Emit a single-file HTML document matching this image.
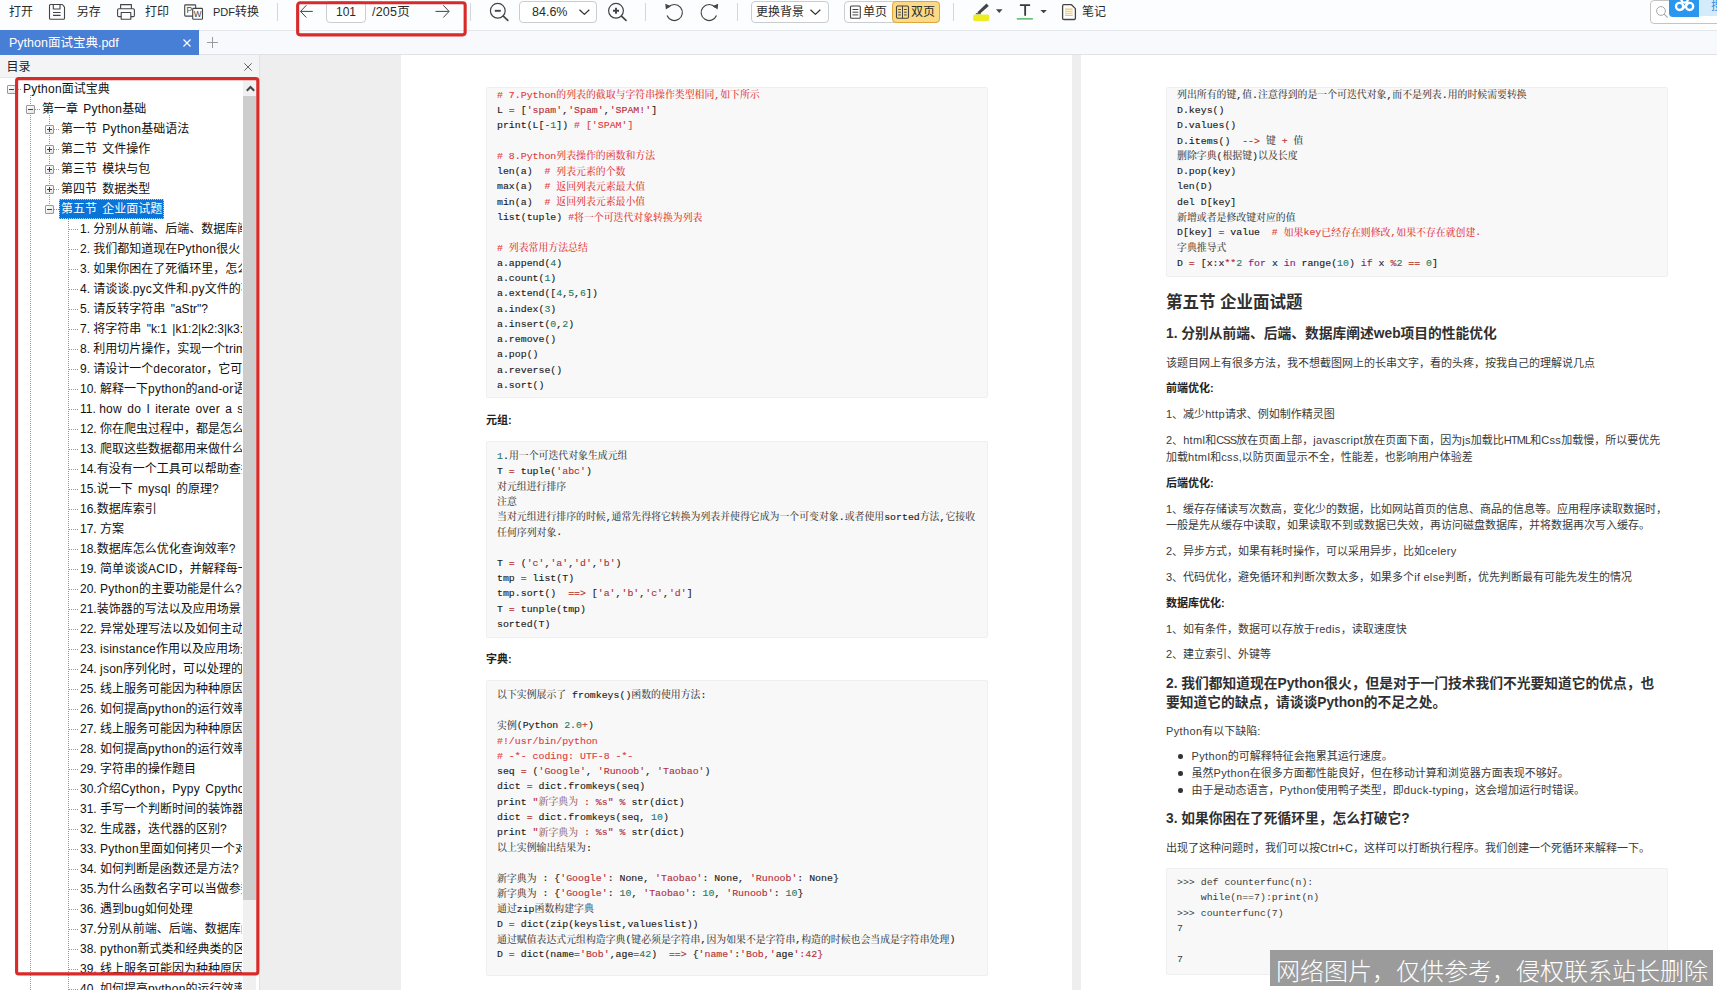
<!DOCTYPE html>
<html lang="zh-CN">
<head>
<meta charset="utf-8">
<title>Python面试宝典.pdf</title>
<style>
*{box-sizing:border-box;margin:0;padding:0}
html,body{width:1717px;height:990px;overflow:hidden;background:#fff}
body{position:relative;font-family:"Liberation Sans","Noto Sans CJK SC",sans-serif;font-size:12px;color:#222}
.abs{position:absolute}
/* toolbar */
#toolbar{position:absolute;left:0;top:0;width:1717px;height:31px;background:#fbfdff;border-bottom:1px solid #e3e6ea}
#toolbar .t{position:absolute;top:0;height:24px;line-height:24px;font-size:12px;color:#2b2b2b;white-space:nowrap}
#toolbar svg{position:absolute;overflow:visible}
.sep{position:absolute;top:3px;width:1px;height:18px;background:#d3d6da}
.box{position:absolute;border:1px solid #c9cdd2;border-radius:4px;background:#fff}
/* tabs */
#tabs{position:absolute;left:0;top:31px;width:1717px;height:24px;background:#f7f9fc;border-bottom:1px solid #dfe3e8}
#tab1{position:absolute;left:0;top:-1px;width:199px;height:25px;background:#477ed6;color:#fff;font-size:12.5px;line-height:26px;padding-left:9px;white-space:nowrap}
/* sidebar */
#side{position:absolute;left:0;top:55px;width:260px;height:935px;background:#fff;border-right:1px solid #e1e1e1;overflow:hidden}
#sidehead{position:absolute;left:0;top:0;width:259px;height:23px;background:#f3f4f6;font-size:12px;line-height:24px;padding-left:6.500px;color:#222;border-bottom:1px solid #e6e6e6}
#tree{position:absolute;left:0;top:24px;width:242px;height:911px;overflow:hidden;font-size:12px;color:#111}
.ti{position:absolute;height:20px;line-height:21px;white-space:nowrap}
#sb{position:absolute;left:243px;top:24px;width:13px;height:911px;background:#f0f0f0}
#sbthumb{position:absolute;left:0;top:17px;width:13px;height:804px;background:#cdcdcd}
#redbox1{position:absolute;left:15px;top:77px;width:244px;height:898px;border:3px solid #d9282a;border-radius:4px}
#redbox2{position:absolute;left:296px;top:-3px;width:171px;height:40px;border:3px solid #d9282a;border-radius:4px}
/* viewer */
#viewer{position:absolute;left:260px;top:55px;width:1457px;height:935px;background:#eeeeee;overflow:hidden}
.page{position:absolute;top:0;height:935px;background:#fff;overflow:hidden}
#p1{left:141px;width:671px}
#p2{left:821px;width:640px}
/* pdf content */
.code{position:absolute;left:85px;width:502px;background:#f8f8f8;border:1px solid #efefef;border-radius:2px}
pre{position:absolute;left:11px;margin:0;font-family:"Liberation Mono","Noto Serif CJK SC",monospace;font-size:9.9px;line-height:15.27px;color:#1a1a1a;white-space:pre;-webkit-text-stroke:0.13px}
pre .z{font-size:9.9px;color:#444;font-weight:500;-webkit-text-stroke:0;position:relative;top:.5px}
.c{color:#e23c3e}.c .z{color:#e23c3e}
.s{color:#b42f3a}.s .z{color:#9a6a6e}.n{color:#2a7a63}.k{color:#7a2a8a}.o{color:#b52a2a}.g{color:#555}
.h{position:absolute;left:85px;white-space:nowrap;font-weight:bold;color:#222}
.p{position:absolute;left:85px;white-space:nowrap;font-size:10.75px;color:#3a3a3a;line-height:17px}
#wm{position:absolute;left:1270px;top:950px;width:443px;height:36px;background:#9b9b9b;color:#fff;font-size:24px;font-weight:300;line-height:36px;white-space:nowrap;padding-left:6px;padding-top:4px;overflow:hidden}

.ws{word-spacing:2px}.la{letter-spacing:.25px}
.vl{position:absolute;width:1px;background-image:linear-gradient(to bottom,#9a9a9a 50%,transparent 50%);background-size:1px 2px}
.hl{position:absolute;height:1px;background-image:linear-gradient(to right,#9a9a9a 50%,transparent 50%);background-size:2px 1px}
.eb{position:absolute;width:9px;height:9px;border:1px solid #989898;border-radius:1px;background:linear-gradient(135deg,#fff,#e4e4e4)}
.eb:before{content:"";position:absolute;left:1px;top:3px;width:5px;height:1px;background:#3a3f6a}
.eb.pl:after{content:"";position:absolute;left:3px;top:1px;width:1px;height:5px;background:#3a3f6a}
.ti.sel{background:#0a74d8;color:#fff;padding:0 2px;height:20px;outline:1px dotted #f5c38a;outline-offset:-1px}

.b11{font-size:11px;line-height:18px}

.h3{font-size:16.5px;color:#303030}
.h4{font-size:13.75px;color:#303030}
.p{font-size:11px}
.lo{letter-spacing:.35px}.up{letter-spacing:-.9px}
.li{left:110.5px}
.li:before{content:"";position:absolute;left:-13.5px;top:50%;margin-top:-2px;width:4.5px;height:4.5px;border-radius:50%;background:#333}
pre.plain{color:#3c3c3c;-webkit-text-stroke:0}
</style>
</head>
<body>
<div id="toolbar">

<div class="t" style="left:9px">打开</div>
<div class="t" style="left:76.7px">另存</div>
<div class="t" style="left:145px">打印</div>
<div class="t" style="left:213px"><span style="font-size:11px">PDF</span>转换</div>
<div class="sep" style="left:277px"></div>
<div class="box" style="left:326px;top:1px;width:40px;height:22px"></div>
<div class="t" style="left:326px;width:40px;text-align:center;font-size:12px">101</div>
<div class="t" style="left:372px;font-size:12.5px;letter-spacing:.2px">/205页</div>
<div class="sep" style="left:470px"></div>
<div class="box" style="left:519px;top:1px;width:78px;height:22px"></div>
<div class="t" style="left:532px;font-size:12.5px">84.6%</div>
<div class="sep" style="left:645px"></div>
<div class="sep" style="left:737px"></div>
<div class="box" style="left:751px;top:1px;width:78px;height:22px"></div>
<div class="t" style="left:756px">更换背景</div>
<div class="box" style="left:844px;top:1px;width:96px;height:22px"></div>
<div class="t" style="left:863px">单页</div>
<div class="box" style="left:892px;top:1px;width:48px;height:22px;background:#fbd985;border-color:#dfa63c"></div>
<div class="t" style="left:911px">双页</div>
<div class="sep" style="left:953px"></div>
<div class="t" style="left:1082px">笔记</div>
<div class="box" style="left:1650px;top:0;width:80px;height:24px;border-radius:4px;border-color:#c4c4c4"></div>
<div class="abs" style="left:1699px;top:0;width:18px;height:16px;background:#d4ebfb"></div>
<div class="abs" style="left:1711px;top:-2px;font-size:12px;color:#2b8fe6;line-height:16px">搜</div>
<div class="abs" style="left:1669px;top:0;width:30px;height:17px;background:#2a96ee;border-radius:0 0 0 4px"></div>
<svg style="left:0;top:0" width="1717" height="31" viewBox="0 0 1717 31" fill="none" stroke="#444" stroke-width="1.1" stroke-linejoin="round">
<!-- save -->
<path d="M49.5 5.5a1 1 0 0 1 1-1H62.300L64.500 7.200V18.300a1 1 0 0 1-1 1H50.500a1 1 0 0 1-1-1z"/>
<path d="M53.300 4.500V9H60V4.500M53 12.500H60.600M53 15.400H60.600"/>
<!-- print -->
<path d="M120.600 8.700V4.600H131.400V8.700"/>
<rect x="117.600" y="8.700" width="16.800" height="7.900" rx="1.200"/>
<rect x="121.200" y="12.500" width="9.600" height="6.800" fill="#fbfdff"/>
<!-- pdf->word -->
<rect x="184.700" y="4.900" width="11" height="11.200" rx=".8" fill="#fbfdff"/>
<rect x="192.700" y="8.400" width="9.800" height="10.800" rx=".8" fill="#fbfdff"/>
<text x="186.600" y="13" font-family="Liberation Sans,sans-serif" font-size="8.600" fill="#444" stroke="none">P</text>
<text x="193.800" y="17" font-family="Liberation Sans,sans-serif" font-size="8.200" fill="#444" stroke="none">W</text>
<!-- arrows -->
<path d="M312.800 11.400H300.700M306.300 5.300L300.500 11.400l5.800 6.100" stroke-width="1"/>
<path d="M435.500 11.400H448.900M443.300 5.300L449.100 11.400l-5.800 6.100" stroke-width="1"/>
<!-- zoom out -->
<circle cx="497.800" cy="10.800" r="7.400" stroke-width="1.200"/>
<path d="M494.800 10.800h6" stroke-width="1.900"/>
<path d="M503.300 16.100l4.500 4.200" stroke-width="1.700" stroke-linecap="round"/>
<!-- chevron zoom -->
<path d="M579.500 9.700l4.900 4.700 4.900-4.700" stroke-width="1.300" stroke="#333"/>
<!-- zoom in -->
<circle cx="616" cy="10.800" r="7.400" stroke-width="1.200"/>
<path d="M613 10.800h6M616 7.800v6" stroke-width="1.900"/>
<path d="M621.500 16.100l4.500 4.200" stroke-width="1.700" stroke-linecap="round"/>
<!-- rotate ccw -->
<path d="M668.300 7.300A8 8 0 1 1 667 15.600" stroke-width="1.200"/>
<path d="M665.300 3.800l.6 5.800 4.800-3.600z" fill="#444" stroke="none"/>
<!-- rotate cw -->
<path d="M715.200 7.300A8 8 0 1 0 716.500 15.600" stroke-width="1.200"/>
<path d="M718.200 3.800l-.6 5.800-4.800-3.600z" fill="#444" stroke="none"/>
<!-- chevron bg -->
<path d="M810.500 9.700l4.900 4.700 4.900-4.700" stroke-width="1.300" stroke="#333"/>
<!-- single page icon -->
<rect x="850.500" y="6" width="9.800" height="12.300" rx="1" stroke-width="1.100"/>
<path d="M852.500 9.500h5.800M852.500 12.200h5.800M852.500 14.900h5.800" stroke-width="1"/>
<!-- double page icon -->
<rect x="896.500" y="6" width="12" height="12.300" rx="1.200" stroke-width="1.100"/>
<path d="M902.500 6v12.300M898.300 9.500h2.600M898.300 12.200h2.600M898.300 14.900h2.600M904.100 9.500h2.600M904.100 12.200h2.600M904.100 14.900h2.600" stroke-width="1"/>
<!-- highlighter -->
<rect x="973.200" y="14.500" width="16" height="6.500" rx="1.500" fill="#eded21" stroke="none"/>
<path d="M977.400 12.300L986.500 3.600l2.300 2.300-9.200 8.200z" fill="#444" stroke="none"/>
<path d="M975.800 13.600h5" stroke="#666" stroke-width="1.300"/>
<path d="M996 9.300h6.500l-3.250 3.600z" fill="#444" stroke="none"/>
<!-- T -->
<path d="M1019.900 5.050h10.200M1025.150 5v10.700" stroke="#3a3a3a" stroke-width="1.800"/>
<rect x="1016.800" y="18" width="16.100" height="1.700" fill="#6cc079" stroke="none"/>
<path d="M1040.400 9.900h6.500l-3.250 3.400z" fill="#444" stroke="none"/>
<!-- note -->
<path d="M1063.900 4.700h7.600l3.900 3.900v9.600a1.300 1.300 0 0 1-1.300 1.300h-10.200a1.300 1.300 0 0 1-1.300-1.300v-12.200a1.300 1.300 0 0 1 1.300-1.300z" stroke-width="1.300" fill="#fff"/>
<path d="M1065 9.100h7.700M1065 11.200h7.700M1065 13.300h7.700M1065 15.400h7.700" stroke="#f2c45f" stroke-width="1.100"/>
<!-- search -->
<circle cx="1661" cy="11" r="4.400" stroke="#a8a8a8" stroke-width="1"/>
<path d="M1664.200 14.200l3.500 3.400" stroke="#a8a8a8" stroke-width="1.100"/>
<!-- cloud -->
<g stroke="#fff" stroke-width="2.300" stroke-linecap="round"><circle cx="1679.600" cy="6.400" r="3.600"/><circle cx="1689.600" cy="6.400" r="3.600"/><circle cx="1684.600" cy="-.500" r="3.200"/><path d="M1682.200 9.300L1687.800 3.400"/></g>
</svg>

</div>
<div id="tabs">
<div id="tab1">Python面试宝典.pdf</div>

<svg class="abs" style="left:183px;top:8px" width="8" height="8" viewBox="0 0 8 8" stroke="#fff" stroke-width="1.200"><path d="M.5.500l7 7M7.500.500l-7 7"/></svg>
<svg class="abs" style="left:206.500px;top:6px" width="11" height="11" viewBox="0 0 11 11" stroke="#9a9a9a" stroke-width="1"><path d="M5.500 0v11M0 5.500h11"/></svg>

</div>
<div id="side">
<div id="sidehead">目录</div>
<svg class="abs" style="left:244px;top:7.700px" width="8" height="8" viewBox="0 0 8 8" stroke="#666" stroke-width="1"><path d="M.3.300l7.400 7.400M7.700.300l-7.400 7.400"/></svg>
<div id="tree">
<div class="vl" style="left:30px;top:16px;height:900px"></div>
<div class="vl" style="left:49px;top:36px;height:94px"></div>
<div class="vl" style="left:68px;top:136px;height:780px"></div>
<div class="hl" style="left:16px;top:10px;width:6px"></div>
<div class="eb mi" style="left:7px;top:6px"></div>
<div class="ti" style="left:23px;top:0px"><span class="la">Python</span>面试宝典</div>
<div class="hl" style="left:35px;top:30px;width:6px"></div>
<div class="eb mi" style="left:26px;top:26px"></div>
<div class="ti" style="left:42px;top:20px">第一章<span class="ws"> </span><span class="la">Python</span>基础</div>
<div class="hl" style="left:54px;top:50px;width:6px"></div>
<div class="eb pl" style="left:45px;top:46px"></div>
<div class="ti" style="left:61px;top:40px">第一节<span class="ws"> </span><span class="la">Python</span>基础语法</div>
<div class="hl" style="left:54px;top:70px;width:6px"></div>
<div class="eb pl" style="left:45px;top:66px"></div>
<div class="ti" style="left:61px;top:60px">第二节<span class="ws"> </span>文件操作</div>
<div class="hl" style="left:54px;top:90px;width:6px"></div>
<div class="eb pl" style="left:45px;top:86px"></div>
<div class="ti" style="left:61px;top:80px">第三节<span class="ws"> </span>模块与包</div>
<div class="hl" style="left:54px;top:110px;width:6px"></div>
<div class="eb pl" style="left:45px;top:106px"></div>
<div class="ti" style="left:61px;top:100px">第四节<span class="ws"> </span>数据类型</div>
<div class="hl" style="left:54px;top:130px;width:6px"></div>
<div class="eb mi" style="left:45px;top:126px"></div>
<div class="ti sel" style="left:59px;top:120px">第五节<span class="ws"> </span>企业面试题</div>
<div class="hl" style="left:69px;top:150px;width:9px"></div>
<div class="ti" style="left:80px;top:140px">1. 分别从前端、后端、数据库阐述<span class="la">web</span>项目的性能优化</div>
<div class="hl" style="left:69px;top:170px;width:9px"></div>
<div class="ti" style="left:80px;top:160px">2. 我们都知道现在<span class="la">Python</span>很火，但是对于一门技术我们不光要知道它的优点</div>
<div class="hl" style="left:69px;top:190px;width:9px"></div>
<div class="ti" style="left:80px;top:180px">3. 如果你困在了死循环里，怎么打破它？</div>
<div class="hl" style="left:69px;top:210px;width:9px"></div>
<div class="ti" style="left:80px;top:200px">4. 请谈谈.<span class="la">pyc</span>文件和.<span class="la">py</span>文件的不同之处</div>
<div class="hl" style="left:69px;top:230px;width:9px"></div>
<div class="ti" style="left:80px;top:220px">5. 请反转字符串<span class="ws"> </span>"aStr"?</div>
<div class="hl" style="left:69px;top:250px;width:9px"></div>
<div class="ti" style="left:80px;top:240px">7. 将字符串<span class="ws"> </span>"k:1<span class="ws"> </span>|k1:2|k2:3|k3:4"，处理成字典</div>
<div class="hl" style="left:69px;top:270px;width:9px"></div>
<div class="ti" style="left:80px;top:260px">8. 利用切片操作，实现一个<span class="la">trim</span>()函数</div>
<div class="hl" style="left:69px;top:290px;width:9px"></div>
<div class="ti" style="left:80px;top:280px">9. 请设计一个<span class="la">decorator</span>，它可作用于任何函数上</div>
<div class="hl" style="left:69px;top:310px;width:9px"></div>
<div class="ti" style="left:80px;top:300px">10. 解释一下<span class="la">python</span>的<span class="la">and</span>-<span class="la">or</span>语法</div>
<div class="hl" style="left:69px;top:330px;width:9px"></div>
<div class="ti" style="left:80px;top:320px">11. <span class="la">how</span><span class="ws"> </span><span class="la">do</span><span class="ws"> </span>I<span class="ws"> </span><span class="la">iterate</span><span class="ws"> </span><span class="la">over</span><span class="ws"> </span>a<span class="ws"> </span><span class="la">sequence</span><span class="ws"> </span><span class="la">in</span><span class="ws"> </span><span class="la">reverse</span><span class="ws"> </span><span class="la">order</span></div>
<div class="hl" style="left:69px;top:350px;width:9px"></div>
<div class="ti" style="left:80px;top:340px">12. 你在爬虫过程中，都是怎么解决反爬的</div>
<div class="hl" style="left:69px;top:370px;width:9px"></div>
<div class="ti" style="left:80px;top:360px">13. 爬取这些数据都用来做什么的</div>
<div class="hl" style="left:69px;top:390px;width:9px"></div>
<div class="ti" style="left:80px;top:380px">14.有没有一个工具可以帮助查找<span class="la">python</span>的<span class="la">bug</span></div>
<div class="hl" style="left:69px;top:410px;width:9px"></div>
<div class="ti" style="left:80px;top:400px">15.说一下<span class="ws"> </span><span class="la">mysql</span><span class="ws"> </span>的原理?</div>
<div class="hl" style="left:69px;top:430px;width:9px"></div>
<div class="ti" style="left:80px;top:420px">16.数据库索引</div>
<div class="hl" style="left:69px;top:450px;width:9px"></div>
<div class="ti" style="left:80px;top:440px">17. 方案</div>
<div class="hl" style="left:69px;top:470px;width:9px"></div>
<div class="ti" style="left:80px;top:460px">18.数据库怎么优化查询效率?</div>
<div class="hl" style="left:69px;top:490px;width:9px"></div>
<div class="ti" style="left:80px;top:480px">19. 简单谈谈<span class="la">ACID</span>，并解释每一个特性</div>
<div class="hl" style="left:69px;top:510px;width:9px"></div>
<div class="ti" style="left:80px;top:500px">20. <span class="la">Python</span>的主要功能是什么?</div>
<div class="hl" style="left:69px;top:530px;width:9px"></div>
<div class="ti" style="left:80px;top:520px">21.装饰器的写法以及应用场景</div>
<div class="hl" style="left:69px;top:550px;width:9px"></div>
<div class="ti" style="left:80px;top:540px">22. 异常处理写法以及如何主动抛出异常</div>
<div class="hl" style="left:69px;top:570px;width:9px"></div>
<div class="ti" style="left:80px;top:560px">23. <span class="la">isinstance</span>作用以及应用场景</div>
<div class="hl" style="left:69px;top:590px;width:9px"></div>
<div class="ti" style="left:80px;top:580px">24. <span class="la">json</span>序列化时，可以处理的数据类型</div>
<div class="hl" style="left:69px;top:610px;width:9px"></div>
<div class="ti" style="left:80px;top:600px">25. 线上服务可能因为种种原因导致挂掉怎么办</div>
<div class="hl" style="left:69px;top:630px;width:9px"></div>
<div class="ti" style="left:80px;top:620px">26. 如何提高<span class="la">python</span>的运行效率</div>
<div class="hl" style="left:69px;top:650px;width:9px"></div>
<div class="ti" style="left:80px;top:640px">27. 线上服务可能因为种种原因导致挂掉怎么办</div>
<div class="hl" style="left:69px;top:670px;width:9px"></div>
<div class="ti" style="left:80px;top:660px">28. 如何提高<span class="la">python</span>的运行效率</div>
<div class="hl" style="left:69px;top:690px;width:9px"></div>
<div class="ti" style="left:80px;top:680px">29. 字符串的操作题目</div>
<div class="hl" style="left:69px;top:710px;width:9px"></div>
<div class="ti" style="left:80px;top:700px">30.介绍<span class="la">Cython</span>，<span class="la">Pypy</span><span class="ws"> </span><span class="la">Cpython</span><span class="ws"> </span><span class="la">Numba</span>各有什么缺点</div>
<div class="hl" style="left:69px;top:730px;width:9px"></div>
<div class="ti" style="left:80px;top:720px">31. 手写一个判断时间的装饰器</div>
<div class="hl" style="left:69px;top:750px;width:9px"></div>
<div class="ti" style="left:80px;top:740px">32. 生成器，迭代器的区别?</div>
<div class="hl" style="left:69px;top:770px;width:9px"></div>
<div class="ti" style="left:80px;top:760px">33. <span class="la">Python</span>里面如何拷贝一个对象</div>
<div class="hl" style="left:69px;top:790px;width:9px"></div>
<div class="ti" style="left:80px;top:780px">34. 如何判断是函数还是方法?</div>
<div class="hl" style="left:69px;top:810px;width:9px"></div>
<div class="ti" style="left:80px;top:800px">35.为什么函数名字可以当做参数用</div>
<div class="hl" style="left:69px;top:830px;width:9px"></div>
<div class="ti" style="left:80px;top:820px">36. 遇到<span class="la">bug</span>如何处理</div>
<div class="hl" style="left:69px;top:850px;width:9px"></div>
<div class="ti" style="left:80px;top:840px">37.分别从前端、后端、数据库阐述<span class="la">web</span>项目的性能优化</div>
<div class="hl" style="left:69px;top:870px;width:9px"></div>
<div class="ti" style="left:80px;top:860px">38. <span class="la">python</span>新式类和经典类的区别</div>
<div class="hl" style="left:69px;top:890px;width:9px"></div>
<div class="ti" style="left:80px;top:880px">39. 线上服务可能因为种种原因导致挂掉怎么办</div>
<div class="hl" style="left:69px;top:910px;width:9px"></div>
<div class="ti" style="left:80px;top:900px">40. 如何提高<span class="la">python</span>的运行效率</div>
</div>
<div id="sb"><div id="sbthumb"></div>

<svg class="abs" style="left:2.500px;top:5.500px" width="9" height="7" viewBox="0 0 9 7" fill="none" stroke="#444" stroke-width="2"><path d="M.800 5.800L4.500 2 8.200 5.800"/></svg>

</div>
</div>
<div id="viewer">
<div class="page" id="p1">
<div class="code" style="left:85px;top:32px;height:311px"></div>
<pre style="left:96px;top:32.900000000000006px"><span class="c"># 7.Python<span class="z">的列表的截取与字符串操作类型相同</span>,<span class="z">如下所示</span></span>
L <span class="o">=</span> [<span class="s">'spam'</span>,<span class="s">'Spam'</span>,<span class="s">'SPAM!'</span>]
print(L[<span class="o">-</span><span class="n">1</span>]) <span class="c"># ['SPAM']</span>

<span class="c"># 8.Python<span class="z">列表操作的函数和方法</span></span>
len(a)  <span class="c"># <span class="z">列表元素的个数</span></span>
max(a)  <span class="c"># <span class="z">返回列表元素最大值</span></span>
min(a)  <span class="c"># <span class="z">返回列表元素最小值</span></span>
list(tuple) <span class="c">#<span class="z">将一个可迭代对象转换为列表</span></span>

<span class="c"># <span class="z">列表常用方法总结</span></span>
a.append(<span class="n">4</span>)
a.count(<span class="n">1</span>)
a.extend([<span class="n">4</span>,<span class="n">5</span>,<span class="n">6</span>])
a.index(<span class="n">3</span>)
a.insert(<span class="n">0</span>,<span class="n">2</span>)
a.remove()
a.pop()
a.reverse()
a.sort()</pre>
<div class="h b11" style="top:356px">元组:</div>
<div class="code" style="left:85px;top:386px;height:197px"></div>
<pre style="left:96px;top:393.9px"><span class="n">1</span>.<span class="z">用一个可迭代对象生成元组</span>
T <span class="o">=</span> tuple(<span class="s">'abc'</span>)
<span class="z">对元组进行排序</span>
<span class="z">注意</span>
<span class="z">当对元组进行排序的时候</span>,<span class="z">通常先得将它转换为列表并使得它成为一个可变对象</span>.<span class="z">或者使用</span>sorted<span class="z">方法</span>,<span class="z">它接收</span>
<span class="z">任何序列对象</span>.

T <span class="o">=</span> (<span class="s">'c'</span>,<span class="s">'a'</span>,<span class="s">'d'</span>,<span class="s">'b'</span>)
tmp <span class="o">=</span> list(T)
tmp.sort()  <span class="o">==&gt;</span> [<span class="s">'a'</span>,<span class="s">'b'</span>,<span class="s">'c'</span>,<span class="s">'d'</span>]
T <span class="o">=</span> tunple(tmp)
sorted(T)</pre>
<div class="h b11" style="top:595px">字典:</div>
<div class="code" style="left:85px;top:625px;height:296px"></div>
<pre style="left:96px;top:632.9px"><span class="z">以下实例展示了</span> fromkeys()<span class="z">函数的使用方法</span>:

<span class="z">实例</span>(Python <span class="n">2.0</span><span class="o">+</span>)
<span class="c">#!/usr/bin/python</span>
<span class="c"># -*- coding: UTF-8 -*-</span>
seq <span class="o">=</span> (<span class="s">'Google'</span>, <span class="s">'Runoob'</span>, <span class="s">'Taobao'</span>)
dict <span class="o">=</span> dict.fromkeys(seq)
print <span class="s">"<span class="z">新字典为</span> : %s"</span> <span class="o">%</span> str(dict)
dict <span class="o">=</span> dict.fromkeys(seq, <span class="n">10</span>)
print <span class="s">"<span class="z">新字典为</span> : %s"</span> <span class="o">%</span> str(dict)
<span class="z">以上实例输出结果为</span>:

<span class="z">新字典为</span> : {<span class="s">'Google'</span>: None, <span class="s">'Taobao'</span>: None, <span class="s">'Runoob'</span>: None}
<span class="z">新字典为</span> : {<span class="s">'Google'</span>: <span class="n">10</span>, <span class="s">'Taobao'</span>: <span class="n">10</span>, <span class="s">'Runoob'</span>: <span class="n">10</span>}
<span class="z">通过</span>zip<span class="z">函数构建字典</span>
D <span class="o">=</span> dict(zip(keyslist,valueslist))
<span class="z">通过赋值表达式元组构造字典</span>(<span class="z">键必须是字符串</span>,<span class="z">因为如果不是字符串</span>,<span class="z">构造的时候也会当成是字符串处理</span>)
D <span class="o">=</span> dict(name<span class="o">=</span><span class="s">'Bob'</span>,age<span class="o">=</span><span class="n">42</span>)  <span class="o">==&gt;</span> {<span class="s">'name'</span>:<span class="s">'Bob,'</span>age<span class="s">':42}</span></pre>

</div>
<div class="page" id="p2">
<div class="code" style="left:85px;top:32px;height:190px"></div>
<pre style="left:96px;top:32.900000000000006px"><span class="z">列出所有的键</span>,<span class="z">值</span>.<span class="z">注意得到的是一个可迭代对象</span>,<span class="z">而不是列表</span>.<span class="z">用的时候需要转换</span>
D.keys()
D.values()
D.items()  <span class="o">--&gt;</span> <span class="z">键</span> <span class="o">+</span> <span class="z">值</span>
<span class="z">删除字典</span>(<span class="z">根据键</span>)<span class="z">以及长度</span>
D.pop(key)
len(D)
del D[key]
<span class="z">新增或者是修改键对应的值</span>
D[key] <span class="o">=</span> value  <span class="c"># <span class="z">如果</span>key<span class="z">已经存在则修改</span>,<span class="z">如果不存在就创建</span>.</span>
<span class="z">字典推导式</span>
D <span class="o">=</span> [x:x<span class="o">**</span><span class="n">2</span> <span class="k">for</span> x <span class="k">in</span> range(<span class="n">10</span>) <span class="k">if</span> x <span class="o">%</span><span class="n">2</span> <span class="o">==</span> <span class="n">0</span>]</pre>
<div class="h h3" style="top:235.0px;line-height:24px">第五节 企业面试题</div>
<div class="h h4" style="top:269.0px;line-height:20px">1. 分别从前端、后端、数据库阐述web项目的性能优化</div>
<div class="p" style="top:299.0px;line-height:18px">该题目网上有很多方法，我不想截图网上的长串文字，看的头疼，按我自己的理解说几点</div>
<div class="h b11" style="top:324.0px;line-height:18px">前端优化:</div>
<div class="p" style="top:350.0px;line-height:18px">1、减少<span class="lo">http</span>请求、例如制作精灵图</div>
<div class="p" style="top:376.5px;line-height:17px">2、<span class="lo">html</span>和<span class="up">CSS</span>放在页面上部，<span class="lo">javascript</span>放在页面下面，因为<span class="lo">js</span>加载比<span class="up">HTML</span>和<span class="lo">Css</span>加载慢，所以要优先<br>加载<span class="lo">html</span>和<span class="lo">css</span>,以防页面显示不全，性能差，也影响用户体验差</div>
<div class="h b11" style="top:419.0px;line-height:18px">后端优化:</div>
<div class="p" style="top:445.8px;line-height:16.5px">1、缓存存储读写次数高，变化少的数据，比如网站首页的信息、商品的信息等。应用程序读取数据时，<br>一般是先从缓存中读取，如果读取不到或数据已失效，再访问磁盘数据库，并将数据再次写入缓存。</div>
<div class="p" style="top:487.0px;line-height:18px">2、异步方式，如果有耗时操作，可以采用异步，比如<span class="lo">celery</span></div>
<div class="p" style="top:513.0px;line-height:18px">3、代码优化，避免循环和判断次数太多，如果多个<span class="lo">if</span> <span class="lo">else</span>判断，优先判断最有可能先发生的情况</div>
<div class="h b11" style="top:539.0px;line-height:18px">数据库优化:</div>
<div class="p" style="top:565.0px;line-height:18px">1、如有条件，数据可以存放于<span class="lo">redis</span>，读取速度快</div>
<div class="p" style="top:590.0px;line-height:18px">2、建立索引、外键等</div>
<div class="h h4" style="top:618.5px;line-height:19px">2. 我们都知道现在Python很火，但是对于一门技术我们不光要知道它的优点，也<br>要知道它的缺点，请谈谈Python的不足之处。</div>
<div class="p" style="top:667.0px;line-height:18px"><span class="lo">Python</span>有以下缺陷:</div>
<div class="p li" style="top:692.0px;line-height:18px"><span class="lo">Python</span>的可解释特征会拖累其运行速度。</div>
<div class="p li" style="top:709.0px;line-height:18px">虽然<span class="lo">Python</span>在很多方面都性能良好，但在移动计算和浏览器方面表现不够好。</div>
<div class="p li" style="top:726.0px;line-height:18px">由于是动态语言，<span class="lo">Python</span>使用鸭子类型，即<span class="lo">duck-typing</span>，这会增加运行时错误。</div>
<div class="h h4" style="top:754.0px;line-height:20px">3. 如果你困在了死循环里，怎么打破它?</div>
<div class="p" style="top:784.0px;line-height:18px">出现了这种问题时，我们可以按<span class="lo">Ctrl</span>+C，这样可以打断执行程序。我们创建一个死循环来解释一下。</div>
<div class="code" style="left:85px;top:813px;height:107px"></div>
<pre class="plain" style="left:96px;top:820.2px">&gt;&gt;&gt; def counterfunc(n):
    while(n==7):print(n)
&gt;&gt;&gt; counterfunc(7)
7

7</pre>

</div>
</div>

<svg class="abs" style="left:0;top:0;pointer-events:none" width="1717" height="990" viewBox="0 0 1717 990" fill="none" stroke="#d82a28" stroke-width="3.500">
<rect x="16.600" y="78.600" width="241.200" height="895.300" rx="2.200" stroke-width="3.100"/>
<rect x="297.650" y="2.750" width="167.500" height="32.100" rx="2.500" stroke-width="3.100"/>
</svg>


<div id="wm">网络图片，仅供参考，侵权联系站长删除</div>
</body>
</html>
